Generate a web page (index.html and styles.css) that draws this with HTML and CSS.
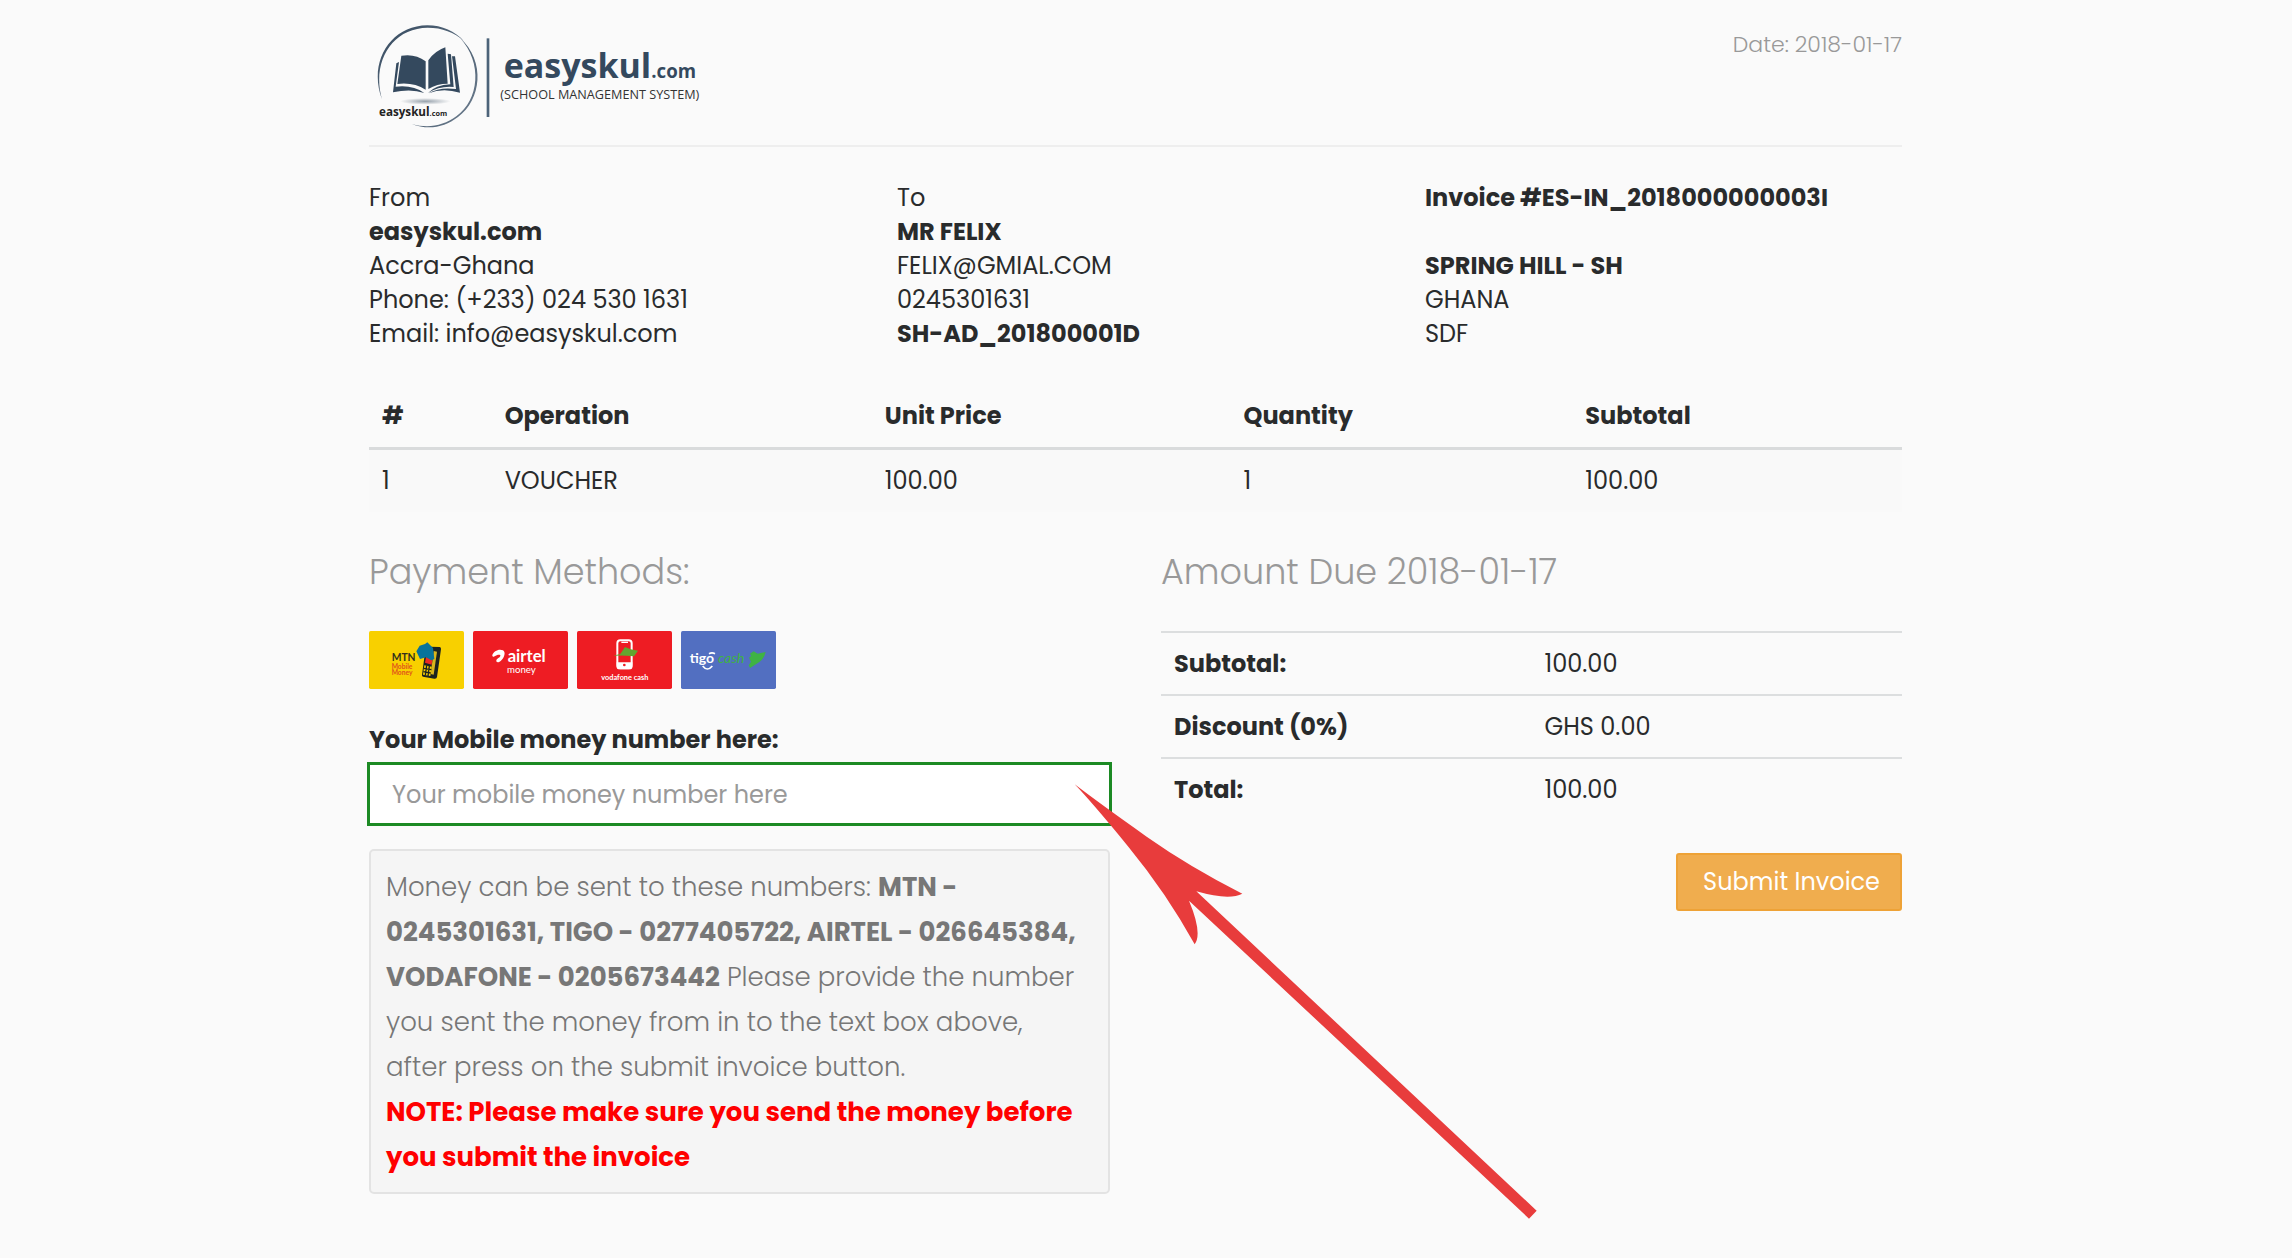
FILE: index.html
```html
<!DOCTYPE html>
<html lang="en">
<head>
<meta charset="utf-8">
<meta name="viewport" content="width=device-width, initial-scale=1">
<title>Invoice - easyskul.com</title>
<link rel="stylesheet" href="styles.css">
</head>
<body>
<main class="invoice">
  <header class="invoice-header">
    <svg class="logo" viewBox="27 0 1035 399" role="img" aria-label="easyskul.com school management system">
      <defs>
        <radialGradient id="shade"><stop offset="0" stop-color="#34495e" stop-opacity=".5"/><stop offset="1" stop-color="#34495e" stop-opacity="0"/></radialGradient>
        <linearGradient id="ringfade" x1="0" y1="0" x2="1" y2="1"><stop offset="0" stop-color="#34495e"/><stop offset="1" stop-color="#6f7f90"/></linearGradient>
      </defs>
      <g fill="url(#ringfade)">
        <path d="M66 265C24 155 90 44 202 43c45 0 83 18 110 47C282 64 247 50 203 50 96 51 34 152 66 265z"/>
        <path d="M300 80c78 72 64 186-6 238-40 30-87 41-139 21 50 14 96 5 134-23 68-50 80-160 11-236z"/>
      </g>
      <g fill="#34495e">
        <path d="M124 134q42-7 73 17v85q-36-23-85-17z"/>
        <path d="M205 148q19-28 51-39l7 109q-32 0-58 16z"/>
        <path d="M109 157l8-4-10 74q52-6 86 19-40-14-94-2z"/>
        <path d="M263 128l10 2 8 98q-42-4-77 18 23-24 67-26z"/>
        <path d="M276 136h9l15 109q-52-16-94 2 33-20 82-13z"/>
      </g>
      <ellipse cx="196" cy="271" rx="76" ry="10" fill="url(#shade)"/>
      <text class="logo-small" x="57" y="316">easyskul<tspan class="logo-tiny">.com</tspan></text>
      <rect x="380" y="82" width="8" height="236" fill="#4c6379"/>
      <text class="logo-name" x="431" y="202">easyskul<tspan class="logo-domain">.com</tspan></text>
      <text class="logo-tagline" x="421" y="263">(SCHOOL MANAGEMENT SYSTEM)</text>
    </svg>
    <small class="date">Date: 2018-01-17</small>
  </header>

  <section class="parties">
    <address>From<br><strong>easyskul.com</strong><br>Accra-Ghana<br>Phone: (+233) 024 530 1631<br>Email: info@easyskul.com</address>
    <address>To<br><strong>MR FELIX</strong><br>FELIX@GMIAL.COM<br>0245301631<br><strong>SH-AD_201800001D</strong></address>
    <address><strong>Invoice #ES-IN_2018000000003I</strong><br><br><strong>SPRING HILL - SH</strong><br>GHANA<br>SDF</address>
  </section>

  <table class="items">
    <colgroup><col class="col-num"><col class="col-op"><col class="col-price"><col class="col-qty"><col></colgroup>
    <thead><tr><th>#</th><th>Operation</th><th>Unit Price</th><th>Quantity</th><th>Subtotal</th></tr></thead>
    <tbody><tr><td>1</td><td>VOUCHER</td><td>100.00</td><td>1</td><td>100.00</td></tr></tbody>
  </table>

  <div class="payment">
    <section>
      <h2>Payment Methods:</h2>
      <div class="methods">
        <svg class="method" viewBox="0 0 285 174" role="img" aria-label="MTN Mobile Money">
          <rect width="285" height="174" rx="5" fill="#f8d000"/>
          <text class="mtn" x="68" y="91">MTN</text>
          <text class="mtn-sub" x="68" y="113">Mobile</text>
          <text class="mtn-sub" x="68" y="132">Money</text>
          <path d="M184 47l28 1q5 1 4 7l-12 83q-1 6-8 5l-34-6q-4-1-3-6l10-73z" fill="#1c2320"/>
          <path d="M194 60l10 2-10 69-9-2z" fill="#d9b51c"/>
          <path d="M171 78l20 3-3 20-20-6z" fill="#ed2a24"/>
          <path d="M166 103l22 4-4 28-22-4z" fill="#f8d000"/>
          <path d="M164 112l23 4M163 122l22 4M173 103l-4 30M181 105l-4 30" stroke="#1c2320" stroke-width="4"/>
          <path d="M142 61l10-17 16-5 7-5 17 17 4 33-9 4-16-9-18 5z" fill="#08739b"/>
        </svg>
        <svg class="method" viewBox="0 0 285 174" role="img" aria-label="Airtel Money">
          <rect width="285" height="174" rx="5" fill="#ee1c23"/>
          <path d="M58 72c4-12 20-20 32-14 10 6 3 24-7 32-6 5-14 6-13-2 1-6 9-6 12-13 2-6-11-4-17 1-3 3-8 1-7-4z" fill="#fff"/>
          <text class="airtel" x="104" y="94">airtel</text>
          <text class="airtel-sub" x="102" y="127">money</text>
        </svg>
        <svg class="method" viewBox="0 0 285 174" role="img" aria-label="Vodafone Cash">
          <rect width="285" height="174" rx="5" fill="#ee1c23"/>
          <rect x="121" y="28" width="43" height="84" rx="9" fill="#ee1c23" stroke="#fff" stroke-width="6"/>
          <path d="M119 94h47v14q0 7-8 7h-31q-8 0-8-7z" fill="#fff"/>
          <path d="M133 34h20" stroke="#fff" stroke-width="4"/>
          <circle cx="142" cy="102" r="4" fill="#ee1c23"/>
          <path d="M108 74l22-5 14-21 17 7 22 4-12 17q-34-4-63-2z" fill="#63a52f"/>
          <text class="vodafone" x="73" y="147">vodafone cash</text>
        </svg>
        <svg class="method" viewBox="0 0 285 174" role="img" aria-label="Tigo Cash">
          <rect width="285" height="174" rx="5" fill="#526fc1"/>
          <text class="tigo" x="26" y="97">tigo</text>
          <path d="M84 68q9-5 18 0M65 105q14 18 29 0" fill="none" stroke="#fff" stroke-width="5"/>
          <text class="tigo-cash" x="111" y="97">cash</text>
          <path d="M207 68l11-7 12 7 24-5q-4 20-20 31l-27 17-4-8 7-11-6-12 6-5z" fill="#3fb344"/>
        </svg>
      </div>
      <label class="field-label" for="momo">Your Mobile money number here:</label>
      <div class="field">
        <input id="momo" type="text" placeholder="Your mobile money number here">
        <svg class="arrow" viewBox="0 0 1560 1440" aria-hidden="true">
          <path fill="#e83c3c" d="M104 73Q192 140 320 230T607 401Q567 422 469 394L1490 1352 1467 1376 447 422Q488 520 464 553Q380 400 265 260T104 73z"/>
        </svg>
      </div>
      <p class="notice">Money can be sent to these numbers: <strong>MTN -<br>0245301631, TIGO - 0277405722, AIRTEL - 026645384,<br>VODAFONE - 0205673442</strong> Please provide the number<br>you sent the money from in to the text box above,<br>after press on the submit invoice button.<br><strong class="warning">NOTE: Please make sure you send the money before<br>you submit the invoice</strong></p>
    </section>
    <section>
      <h2>Amount Due 2018-01-17</h2>
      <table class="totals">
        <tbody>
          <tr><th scope="row">Subtotal:</th><td>100.00</td></tr>
          <tr><th scope="row">Discount (0%)</th><td>GHS 0.00</td></tr>
          <tr><th scope="row">Total:</th><td>100.00</td></tr>
        </tbody>
      </table>
      <div class="actions"><button type="button">Submit Invoice</button></div>
    </section>
  </div>
</main>
</body>
</html>
```
FILE: styles.css
```css
* { box-sizing: border-box; }

body {
  margin: 0;
  padding: 10px 21px 60px 0;
  background: #fafafa;
  color: #292b2c;
  font-family: Poppins, Inter, "Open Sans", sans-serif;
  font-size: 24px;
  line-height: 34px;
}

strong, th { font-weight: 700; }

.invoice {
  width: 90%;
  max-width: 1533px;
  margin: 0 auto;
}

.invoice-header {
  display: flex;
  justify-content: space-between;
  align-items: flex-start;
  border-bottom: 2px solid #eee;
}

.logo { display: block; width: 345px; height: 135px; }
.logo text { font-family: "Open Sans", "Noto Sans", sans-serif; }
.logo .logo-name { font-size: 102px; font-weight: 700; fill: #34495e; }
.logo .logo-domain { font-size: 56px; }
.logo .logo-tagline { font-size: 38px; fill: #333; }
.logo .logo-small { font-size: 35px; font-weight: 700; fill: #222; }
.logo .logo-tiny { font-size: 22px; }

.date {
  padding-top: 18px;
  color: #999;
  font-size: 22px;
  font-weight: 300;
}

.parties {
  display: grid;
  grid-template-columns: repeat(3, 1fr);
  gap: 51px;
  padding-top: 34px;
}

address { font-style: normal; }

table {
  width: 100%;
  border-collapse: collapse;
  table-layout: fixed;
}

th, td { padding: 14px 13px; text-align: left; }

.items { margin-top: 34px; }
.items thead th { border-bottom: 3px solid #d9dbdc; }
.items tbody tr { background: #f9f9f9; }
.col-num { width: 8%; }
.col-op { width: 24.8%; }
.col-price { width: 23.4%; }
.col-qty { width: 22.3%; }

.payment {
  display: grid;
  grid-template-columns: 1fr 1fr;
  gap: 51px;
  padding-top: 35px;
}

h2 {
  margin: 0 0 34px;
  color: #999;
  font-size: 35px;
  font-weight: 300;
  line-height: 50px;
}

.methods { display: flex; gap: 9px; }
.method { width: 95px; height: 58px; }
.method text { font-family: Lato, "Open Sans", sans-serif; fill: #fff; }
.method .mtn { font-size: 31px; font-weight: 700; fill: #33301c; }
.method .mtn-sub { font-size: 20px; font-weight: 700; fill: #e0501c; }
.method .airtel { font-size: 50px; font-weight: 700; }
.method .airtel-sub { font-size: 29px; }
.method .vodafone { font-size: 22px; font-weight: 700; }
.method .tigo { font-size: 42px; font-weight: 700; }
.method .tigo-cash { font-size: 42px; font-style: italic; fill: #3fb344; }

.field-label {
  display: block;
  margin: 34px 0 7px;
  font-weight: 700;
}

.field { position: relative; }

.field input {
  display: block;
  width: 100%;
  height: 60px;
  padding: 0 22px;
  border: 1px solid #1c8a24;
  border-radius: 0;
  outline: 2px solid #1c8a24;
  outline-offset: 0;
  background: #fff;
  color: inherit;
  font: inherit;
}

.field input::placeholder { color: #999; opacity: 1; }

.arrow {
  position: absolute;
  z-index: 1;
  top: -4px;
  left: calc(100% - 70px);
  width: 520px;
  height: 480px;
  pointer-events: none;
}

.notice {
  margin: 25px 0 0;
  padding: 14px 15px 12px;
  border: 2px solid #e3e3e3;
  border-radius: 5px;
  background: #f5f5f5;
  color: #777;
  font-size: 26px;
  font-weight: 300;
  line-height: 45px;
}

.warning { color: #f00; }

.totals tr { border-top: 2px solid #dcdedf; }
.totals th { width: 50%; }
.totals th, .totals td { padding-bottom: 13px; }

.actions { display: flex; justify-content: flex-end; margin-top: 33px; }

.actions button {
  height: 58px;
  padding: 0 20px 0 25px;
  border: 2px solid #eea236;
  border-radius: 3px;
  background: #f0ad4e;
  color: #fff;
  font: inherit;
}

@media (max-width: 1100px) {
  .parties, .payment { grid-template-columns: 1fr; }
}
```
